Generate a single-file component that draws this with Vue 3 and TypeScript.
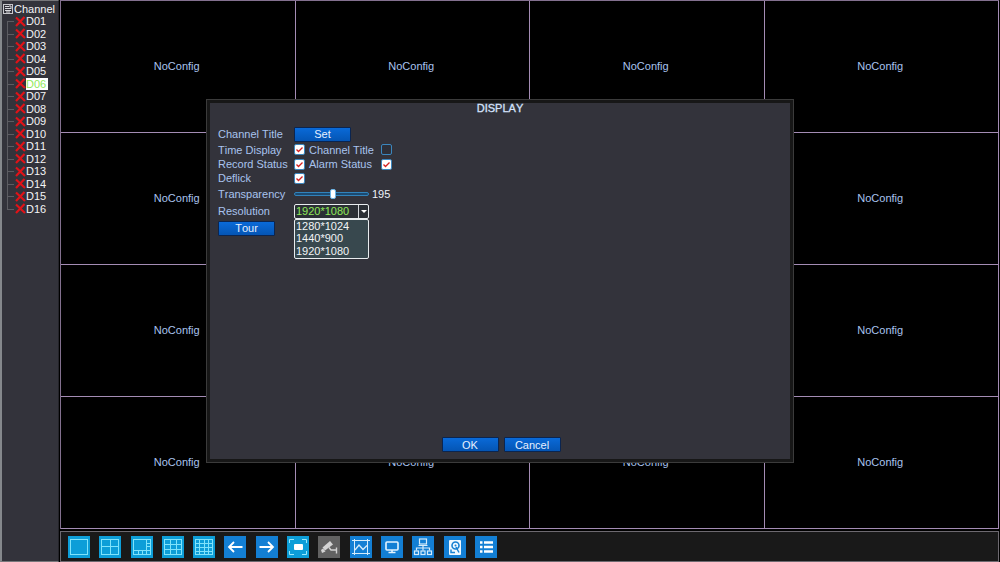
<script setup lang="ts">
import { ref } from 'vue'

interface Tool {
  name: string
  tone: 'cyan' | 'blue' | 'grey'
}

const channels: string[] = Array.from({ length: 16 }, (_, i) => 'D' + String(i + 1).padStart(2, '0'))
const selectedChannel = ref('D06')

const tools: Tool[] = [
  { name: 'View 1', tone: 'cyan' },
  { name: 'View 4', tone: 'cyan' },
  { name: 'View 8', tone: 'cyan' },
  { name: 'View 9', tone: 'cyan' },
  { name: 'View 16', tone: 'cyan' },
  { name: 'Previous', tone: 'blue' },
  { name: 'Next', tone: 'blue' },
  { name: 'Full screen', tone: 'cyan' },
  { name: 'PTZ', tone: 'grey' },
  { name: 'Color', tone: 'blue' },
  { name: 'Display', tone: 'blue' },
  { name: 'Network', tone: 'blue' },
  { name: 'HDD', tone: 'blue' },
  { name: 'Menu', tone: 'blue' },
]

const resolutions: string[] = ['1280*1024', '1440*900', '1920*1080']
const resolution = ref('1920*1080')
const transparency = ref(195)
const timeDisplay = ref(true)
const channelTitle = ref(false)
const recordStatus = ref(true)
const alarmStatus = ref(true)
const deflick = ref(true)
</script>

<template>
  <div class="screen">
    <aside class="sidebar">
      <h2 class="tree-head">
        <svg class="head-icon" viewBox="0 0 10 10" aria-hidden="true">
          <rect x="0.5" y="0.5" width="9" height="9" fill="#33333b" stroke="#c8c8cc" />
          <path d="M2 2.5h4M2 4.5h6M2 6.5h6M3 8h4M6 2h2v3" stroke="#d8d8dc" fill="none" />
        </svg>
        Channel
      </h2>
      <ul class="tree">
        <li v-for="c in channels" :key="c">
          <button
            type="button"
            class="channel"
            :class="{ active: c === selectedChannel }"
            @click="selectedChannel = c"
          >
            <svg class="cross" viewBox="0 0 11 11" aria-hidden="true">
              <path d="M1 1.5L10 10M9.5 1L1 10" stroke="#e01218" stroke-width="2.2" />
            </svg>
            <span>{{ c }}</span>
          </button>
        </li>
      </ul>
    </aside>

    <main class="stage">
      <div class="wall">
        <div v-for="n in 16" :key="n" class="cell">NoConfig</div>
      </div>
      <nav class="toolbar">
        <div class="tools">
          <button
            v-for="(t, i) in tools"
            :key="t.name"
            type="button"
            class="tool"
            :class="t.tone"
            :aria-label="t.name"
          >
            <svg viewBox="0 0 22 22" fill="none" aria-hidden="true">
              <g v-if="i < 5" stroke="#7fe3fb">
                <rect x="2.5" y="3.5" width="17" height="15" />
                <path v-if="i === 1" d="M11.5 3.5v15M2.5 10.5h17" />
                <path v-if="i === 2" d="M15.5 3.5v15M2.5 14.5h17M7.5 14.5v4M11.5 14.5v4M15.5 7.5h4M15.5 10.5h4" />
                <path v-if="i === 3" d="M8.5 3.5v15M14.5 3.5v15M2.5 8.5h17M2.5 13.5h17" />
                <path v-if="i === 4" d="M6.5 3.5v15M11.5 3.5v15M15.5 3.5v15M2.5 7.5h17M2.5 11.5h17M2.5 15.5h17" />
              </g>
              <path v-if="i === 5" d="M18.5 11H5M10 6L5 11L10 16" stroke="#fff" stroke-width="1.8" />
              <path v-if="i === 6" d="M3.5 11H17M12 6L17 11L12 16" stroke="#fff" stroke-width="1.8" />
              <g v-if="i === 7">
                <path d="M2.5 7V3.5H7M15 3.5H19.5V7M19.5 15V18.5H15M7 18.5H2.5V15" stroke="#9be9fb" />
                <rect x="7" y="8" width="9" height="6" rx="1" fill="#fff" />
              </g>
              <g v-if="i === 8" fill="#d4d4d4">
                <path d="M4.5 11.5L12 5L15 8.5L7 14.5Z" />
                <path d="M3 14L5 12.5L7.5 15.5L4 17Z" />
                <path d="M11 11.5L13 14H18M18.5 11.5V17.5" stroke="#d4d4d4" stroke-width="1.4" fill="none" />
              </g>
              <g v-if="i === 9" stroke="#d5ecfb">
                <path d="M2 4.5h18M2 17.5h18M4.5 3v16M17.5 3v16" />
                <path d="M5 14L9 9L13 13.5L17 9.5" stroke-width="1.3" />
              </g>
              <g v-if="i === 10">
                <rect x="5" y="6" width="12" height="8" rx="1" stroke="#e4f4ff" stroke-width="1.6" />
                <path d="M11 14v2M7.5 16.5h7" stroke="#e4f4ff" stroke-width="1.6" />
              </g>
              <g v-if="i === 11" stroke="#d5ecfb" stroke-width="1.2">
                <rect x="7.5" y="3" width="7" height="5" />
                <path d="M6.5 9.5h9M11 9.5v5M4.5 14.5V12h13v2.5" />
                <rect x="2.5" y="15" width="4" height="3.5" />
                <rect x="9" y="15" width="4" height="3.5" />
                <rect x="15.5" y="15" width="4" height="3.5" />
              </g>
              <g v-if="i === 12">
                <rect x="5" y="4" width="12" height="15" rx="1" fill="#eef8ff" />
                <circle cx="11.5" cy="9.5" r="3.5" stroke="#1680d2" stroke-width="1.6" />
                <circle cx="11.5" cy="9.5" r="1" fill="#1680d2" />
                <path d="M12 11l3 5.5M7 13.5v3h4" stroke="#1680d2" stroke-width="1.5" />
              </g>
              <path
                v-if="i === 13"
                d="M5 6.5h2.5M9 6.5h9M5 11h2.5M9 11h9M5 15.5h2.5M9 15.5h9"
                stroke="#fff"
                stroke-width="2.6"
              />
            </svg>
          </button>
        </div>
      </nav>
    </main>

    <div class="overlay">
      <form class="dialog" role="dialog" aria-labelledby="dialog-title" @submit.prevent>
        <h1 id="dialog-title">DISPLAY</h1>

        <div class="fields">
          <label for="set">Channel Title</label>
          <button id="set" type="button" class="btn">Set</button>

          <label for="time">Time Display</label>
          <div class="pair">
            <input id="time" v-model="timeDisplay" type="checkbox" />
            <label for="title">Channel Title</label>
            <input id="title" v-model="channelTitle" type="checkbox" />
          </div>

          <label for="record">Record Status</label>
          <div class="pair">
            <input id="record" v-model="recordStatus" type="checkbox" />
            <label for="alarm">Alarm Status</label>
            <input id="alarm" v-model="alarmStatus" type="checkbox" />
          </div>

          <label for="deflick">Deflick</label>
          <div class="pair">
            <input id="deflick" v-model="deflick" type="checkbox" />
          </div>

          <label for="transparency">Transparency</label>
          <div class="slider">
            <input id="transparency" v-model.number="transparency" type="range" min="128" max="255" />
            <output for="transparency">{{ transparency }}</output>
          </div>

          <label for="resolution">Resolution</label>
          <div class="combo">
            <select id="resolution" v-model="resolution">
              <option v-for="r in resolutions" :key="r" :value="r">{{ r }}</option>
            </select>
            <span class="arrow" aria-hidden="true"></span>
            <ul class="options" role="listbox" aria-label="Resolution">
              <li
                v-for="r in resolutions"
                :key="r"
                role="option"
                :aria-selected="r === resolution"
                @click="resolution = r"
              >
                {{ r }}
              </li>
            </ul>
          </div>

          <button type="button" class="btn">Tour</button>
        </div>

        <footer>
          <button type="submit" class="btn">OK</button>
          <button type="button" class="btn">Cancel</button>
        </footer>
      </form>
    </div>
  </div>
</template>

<style>
body {
  margin: 0;
  background: #000;
}
</style>

<style scoped>
.screen,
.screen * {
  box-sizing: border-box;
}

.screen {
  position: relative;
  display: flex;
  height: 100vh;
  overflow: hidden;
  font: 11px/12px "Liberation Sans", Arial, sans-serif;
  font-kerning: none;
  color: #a9c3ee;
}

button,
select,
input {
  margin: 0;
  font: inherit;
}

ul {
  list-style: none;
  margin: 0;
  padding: 0;
}

.sidebar {
  flex: 0 0 59px;
  background: #33333b;
  border: 1px solid #77777b;
  border-left: 2px solid #85888c;
  border-right-color: #24242a;
  color: #f4f4f6;
}

.tree-head {
  display: flex;
  align-items: center;
  gap: 1px;
  height: 14px;
  margin: 0;
  padding: 2px 0 0 1px;
  font: inherit;
}

.head-icon {
  width: 10px;
  height: 10px;
}

.tree {
  display: grid;
  grid-auto-rows: 1fr;
  height: 200px;
}

.tree li {
  position: relative;
  padding-left: 13px;
}

.tree li::before,
.tree li::after {
  content: "";
  position: absolute;
  left: 5px;
  background: #5c5c62;
}

.tree li::before {
  top: 0;
  bottom: 0;
  width: 1px;
}

.tree li:first-child::before {
  top: 50%;
}

.tree li:last-child::before {
  bottom: 50%;
}

.tree li::after {
  top: 50%;
  width: 7px;
  height: 1px;
}

.channel {
  display: flex;
  align-items: center;
  height: 100%;
  padding: 0;
  border: 0;
  background: none;
  color: inherit;
}

.cross {
  width: 11px;
  height: 11px;
}

.channel span {
  padding-right: 2px;
}

.channel.active span {
  background: #fff;
  color: #8fe95a;
}

.stage {
  flex: 1;
  display: flex;
  flex-direction: column;
  min-width: 0;
  margin-left: 1px;
  padding-right: 1px;
}

.wall {
  flex: 1;
  display: grid;
  grid-template: repeat(4, 1fr) / repeat(4, 1fr);
  border-top: 1px solid #83708f;
  border-left: 1px solid #83708f;
}

.cell {
  display: flex;
  align-items: center;
  justify-content: center;
  padding: 0 2px 2px 0;
  border-right: 1px solid #a48cb4;
  border-bottom: 1px solid #a48cb4;
}

.toolbar {
  height: 31px;
  margin-top: 2px;
  padding: 4px 7px 3px 7px;
  background: #191919;
  border: 1px solid #6d6970;
}

.tools {
  display: flex;
  justify-content: space-between;
  width: 429px;
}

.tool {
  width: 22px;
  height: 22px;
  padding: 0;
  border: 0;
}

.tool svg {
  display: block;
  width: 22px;
  height: 22px;
}

.cyan {
  background: #0d9ed8;
}

.blue {
  background: #137fd4;
}

.grey {
  background: #626262;
}

.overlay {
  position: absolute;
  inset: 0;
  display: flex;
  padding: 99px 206px;
}

.dialog {
  flex: 1;
  display: flex;
  flex-direction: column;
  padding: 0 8px 6px;
  background: #33333b;
  border: 1px solid #3b3b3b;
  outline: 3px solid #171717;
  outline-offset: -4px;
}

h1 {
  margin: 2px 0 12px;
  font: inherit;
  line-height: 12px;
  text-align: center;
  color: #d3e2fb;
  -webkit-text-stroke: 0.3px #d3e2fb;
}

.fields {
  display: grid;
  grid-template-columns: 76px 1fr;
  grid-template-rows: 16px 15px 14px 14px 18px 16px 18px;
  align-items: center;
  justify-items: start;
  padding-left: 3px;
}

.btn {
  width: 57px;
  height: 15px;
  padding: 0;
  border: 1px solid #0b2550;
  border-radius: 1px;
  background: linear-gradient(#0a6ad8, #0455b4);
  color: #e6f0ff;
  line-height: 12px;
}

.pair,
.slider {
  display: flex;
  align-items: center;
}

.pair label {
  width: 72px;
  margin-left: 4px;
}

input[type="checkbox"] {
  appearance: none;
  width: 11px;
  height: 11px;
  border: 1px solid #3b86bd;
  border-radius: 2px;
  background: #2d2f38;
}

input[type="checkbox"]:checked {
  background: #fff url("data:image/svg+xml,%3Csvg xmlns='http://www.w3.org/2000/svg' viewBox='0 0 9 9'%3E%3Cpath d='M1.5 4.5L3.5 6.5L7.5 2.5' fill='none' stroke='%23d42020' stroke-width='1.3'/%3E%3C/svg%3E");
}

.slider {
  gap: 3px;
}

input[type="range"] {
  appearance: none;
  width: 75px;
  height: 10px;
  background: none;
}

input[type="range"]::-webkit-slider-runnable-track {
  height: 4px;
  border: 1px solid #3183bb;
  border-radius: 2px;
  background: #1c4a70;
}

input[type="range"]::-webkit-slider-thumb {
  appearance: none;
  width: 6px;
  height: 10px;
  margin-top: -4px;
  border: 1px solid #6cb4e6;
  border-radius: 2px;
  background: #fff;
}

output {
  color: #eef2fa;
}

.combo {
  position: relative;
  width: 75px;
  height: 15px;
}

select {
  appearance: none;
  display: block;
  width: 100%;
  height: 15px;
  padding: 0 0 0 1px;
  border: 1px solid #e8ecee;
  border-radius: 2px;
  background: #2b2f35;
  color: #8fe95a;
  line-height: 12px;
}

.arrow {
  position: absolute;
  top: 1px;
  right: 1px;
  width: 10px;
  height: 13px;
  border-left: 1px solid #d5d8dc;
  pointer-events: none;
}

.arrow::after {
  content: "";
  position: absolute;
  top: 5px;
  left: 2px;
  border: 3px solid transparent;
  border-top-color: #fff;
  border-bottom: 0;
}

.options {
  position: absolute;
  top: 100%;
  left: 0;
  width: 100%;
  height: 40px;
  display: flex;
  flex-direction: column;
  justify-content: space-around;
  padding-left: 1px;
  border: 1px solid #e8ecee;
  border-radius: 2px;
  background: #38484e;
  color: #f2f5f6;
}

footer {
  display: flex;
  justify-content: center;
  gap: 5px;
  margin-top: auto;
  padding: 0 0 4px 2px;
}
</style>
